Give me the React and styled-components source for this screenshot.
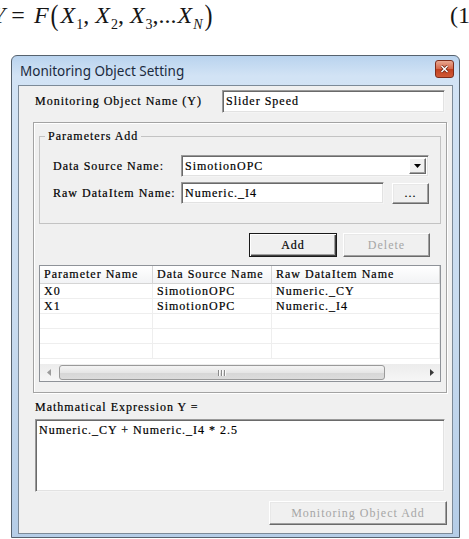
import React from 'react';
import styled, { createGlobalStyle } from 'styled-components';

const GlobalStyle = createGlobalStyle`
  html, body { margin: 0; padding: 0; background: #fff; }
  body { width: 469px; height: 539px; overflow: hidden; }
`;

// the dialog uses a thin serif system font; Times metrics + tracking come close
const dialogFont = `"Liberation Serif", "Times New Roman", serif`;

const Page = styled.div`
  width: 469px;
  height: 539px;
  overflow: hidden;
`;

/* ---------- formula above the dialog ---------- */

const FormulaRow = styled.div`
  display: flex;
  align-items: flex-start;
  height: 53px;
  padding-top: 2px;
  width: 486px;
  margin-left: -8px;
  font-family: "Liberation Serif", "Times New Roman", serif;
  font-size: 24px;
  line-height: 26px;
  color: #151515;
  white-space: nowrap;
`;

const Formula = styled.span`
  display: block;
`;

const Var = styled.span`
  font-style: italic;
`;

const Op = styled.span`
  margin: 0 9px 0 6px;
`;

const Paren = styled.span`
  display: inline-block;
  margin: 0 2px;
  transform: scaleY(1.2);
`;

const Sub = styled.sub`
  font-size: 14px;
  line-height: 0;
  vertical-align: -6px;
  margin-left: 1px;
  font-style: ${p => (p.$italic ? 'italic' : 'normal')};
`;

const Comma = styled.span`
  margin-right: ${p => p.$gap || 6}px;
`;

const EqNumber = styled.span`
  margin-left: auto;
`;

/* ---------- window chrome ---------- */

const Window = styled.div`
  margin-left: 11px;
  width: 449px;
  height: 483px;
  box-sizing: border-box;
  border: 1px solid #56626e;
  border-radius: 6px 6px 0 0;
  background: linear-gradient(180deg, #b9d3ee 0%, #d2e3f5 20px, #c8dbef 55%, #b5cde7 100%);
  padding: 0 6px 3px 6px;
  display: flex;
  flex-direction: column;
`;

const TitleBar = styled.div`
  height: 29px;
  display: flex;
  align-items: center;
  justify-content: space-between;
  padding-left: 2px;
  margin-right: -1px;
`;

const Title = styled.span`
  font-family: "Noto Sans", "Open Sans", sans-serif;
  font-size: 13.5px;
  color: #1b2a3e;
  padding-top: 1px;
`;

const CloseBtn = styled.div`
  align-self: flex-start;
  margin-top: 4px;
  width: 19px;
  height: 18px;
  box-sizing: border-box;
  border: 1px solid #7e2c1b;
  border-radius: 3px;
  background: linear-gradient(180deg, #e9a891 0%, #d6694b 48%, #c2401f 52%, #d05a37 100%);
  display: flex;
  align-items: center;
  justify-content: center;
`;

const Client = styled.div`
  flex: 1;
  background: #f0f0f0;
  border: 1px solid #7c8a98;
  padding: 4px 7px 0 16px;
  display: flex;
  flex-direction: column;
  font-family: ${dialogFont};
  font-size: 12px;
  letter-spacing: 1px;
  color: #000;
  -webkit-text-stroke: 0.2px #000;
`;

/* ---------- controls ---------- */

const Row = styled.div`
  display: flex;
  align-items: center;
  height: ${p => p.$h || 22}px;
  margin-top: ${p => p.$mt || 0}px;
  justify-content: ${p => p.$justify || 'flex-start'};
`;

const Label = styled.span`
  width: ${p => (p.$w ? `${p.$w}px` : 'auto')};
  flex-shrink: 0;
  white-space: pre;
`;

const TextBox = styled.div`
  width: ${p => p.$w}px;
  height: ${p => p.$h || 22}px;
  box-sizing: border-box;
  background: #fff;
  border-style: solid;
  border-width: 1px;
  border-color: #9a9a9a #f4f4f4 #f4f4f4 #9a9a9a;
  box-shadow: inset 1px 1px 0 #6a6a6a, inset -1px -1px 0 #e2e2e2;
  padding: 0 3px;
  display: flex;
  align-items: center;
  white-space: pre;
`;

const Combo = styled(TextBox)`
  padding-right: 2px;
  justify-content: space-between;
`;

const DropBtn = styled.span`
  width: 17px;
  height: 16px;
  box-sizing: border-box;
  background: #f0f0f0;
  border: 1px solid;
  border-color: #fff #6a6a6a #6a6a6a #fff;
  box-shadow: inset -1px -1px 0 #a0a0a0;
  display: flex;
  align-items: center;
  justify-content: center;
`;

const Button = styled.div`
  width: ${p => p.$w}px;
  height: ${p => p.$h || 24}px;
  margin-left: ${p => p.$ml || 0}px;
  box-sizing: border-box;
  background: #f0f0f0;
  border: 1px solid;
  border-color: ${p => (p.$default ? '#1a1a1a' : '#fff #6a6a6a #6a6a6a #fff')};
  box-shadow: ${p =>
    p.$default
      ? 'inset 1px 1px 0 #fff, inset -1px -1px 0 #404040, inset -2px -2px 0 #a0a0a0'
      : 'inset -1px -1px 0 #a0a0a0, inset 1px 1px 0 #e8e8e8'};
  color: ${p => (p.$disabled ? '#a6a6a6' : '#000')};
  -webkit-text-stroke: ${p => (p.$disabled ? '0' : '0.2px #000')};
  display: flex;
  align-items: center;
  justify-content: center;
  white-space: pre;
  flex-shrink: 0;
`;

const ButtonRow = styled.div`
  display: flex;
  justify-content: flex-end;
  gap: 6px;
  margin-top: 9px;
  padding-right: 11px;
`;

/* ---------- panels ---------- */

const OuterPanel = styled.div`
  margin: 9px -2px 0 -2px;
  height: 271px;
  box-sizing: border-box;
  border: 1px solid #a3a3a3;
  box-shadow: inset 1px 1px 0 #fff, 1px 1px 0 #fff;
  padding: 7px 5px 0 5px;
  display: flex;
  flex-direction: column;
`;

const Group = styled.fieldset`
  margin: 0;
  padding: 12px 10px 19px 13px;
  border: 1px solid #c3c3c3;
  min-width: 0;
`;

const Legend = styled.legend`
  margin-left: -8px;
  padding: 0 3px;
  line-height: 13px;
`;

const ListView = styled.div`
  margin-top: 8px;
  height: 117px;
  box-sizing: border-box;
  border: 1px solid #8e9298;
  background: #fff;
  display: flex;
  flex-direction: column;
`;

const cols = '113px 119px 1fr';

const HeaderRow = styled.div`
  display: grid;
  grid-template-columns: ${cols};
  height: 18px;
  flex-shrink: 0;
  box-sizing: border-box;
  border-bottom: 1px solid #d5d5d5;
  background: linear-gradient(180deg, #ffffff, #f2f3f5);
`;

const HeaderCell = styled.div`
  border-right: 1px solid #d5d5d5;
  padding-left: 4px;
  display: flex;
  align-items: center;
  white-space: pre;
  overflow: hidden;
`;

const ListBody = styled.div`
  flex: 1;
  overflow: hidden;
`;

const ListRow = styled.div`
  display: grid;
  grid-template-columns: ${cols};
  height: 15px;
  box-sizing: border-box;
  border-bottom: 1px solid #eeeeee;
`;

const Cell = styled.div`
  border-right: 1px solid #eeeeee;
  padding-left: 4px;
  display: flex;
  align-items: center;
  white-space: pre;
`;

const HScroll = styled.div`
  height: 17px;
  flex-shrink: 0;
  display: flex;
  align-items: center;
  background: linear-gradient(180deg, #ececec, #f6f6f6);
`;

const ScrollArrow = styled.div`
  width: 17px;
  height: 17px;
  display: flex;
  align-items: center;
  justify-content: center;
  flex-shrink: 0;
`;

const Thumb = styled.div`
  margin-left: 2px;
  width: 326px;
  height: 15px;
  box-sizing: border-box;
  border: 1px solid #9a9a9a;
  border-radius: 3px;
  background: linear-gradient(180deg, #f4f4f4 0%, #e6e6e6 50%, #d6d6d6 51%, #dcdcdc 100%);
  display: flex;
  align-items: center;
  justify-content: center;
  gap: 1px;
`;

const GripBar = styled.span`
  width: 1px;
  height: 6px;
  background: #8a8a8a;
  border-right: 1px solid #fafafa;
`;

const Spacer = styled.div`
  flex: 1;
`;

const ExprBox = styled.div`
  margin-top: 5px;
  height: 73px;
  box-sizing: border-box;
  background: #fff;
  border-style: solid;
  border-width: 1px;
  border-color: #9a9a9a #f4f4f4 #f4f4f4 #9a9a9a;
  box-shadow: inset 1px 1px 0 #6a6a6a, inset -1px -1px 0 #e2e2e2;
  padding: 3px 3px;
  white-space: pre;
`;

const rows = [
  ['X0', 'SimotionOPC', 'Numeric._CY'],
  ['X1', 'SimotionOPC', 'Numeric._I4'],
  ['', '', ''],
  ['', '', ''],
  ['', '', ''],
];

export default function App() {
  return (
    <Page>
      <GlobalStyle />
      <FormulaRow>
        <Formula>
          <Var>Y</Var>
          <Op>=</Op>
          <Var>F</Var>
          <Paren>(</Paren>
          <Var>X</Var><Sub>1</Sub><Comma>,</Comma>
          <Var>X</Var><Sub>2</Sub><Comma>,</Comma>
          <Var>X</Var><Sub>3</Sub><Comma $gap={1}>,...</Comma>
          <Var>X</Var><Sub $italic>N</Sub>
          <Paren>)</Paren>
        </Formula>
        <EqNumber>(1)</EqNumber>
      </FormulaRow>

      <Window>
        <TitleBar>
          <Title>Monitoring Object Setting</Title>
          <CloseBtn>
            <svg width="9" height="8" viewBox="0 0 9 8">
              <path d="M1.5 1 L7.5 7 M7.5 1 L1.5 7" stroke="#6b2414" strokeWidth="3" />
              <path d="M1.5 1 L7.5 7 M7.5 1 L1.5 7" stroke="#fff" strokeWidth="1.5" />
            </svg>
          </CloseBtn>
        </TitleBar>

        <Client>
          <Row $h={23} $justify="space-between">
            <Label>Monitoring Object Name (Y)</Label>
            <TextBox $w={223} $h={23}>Slider Speed</TextBox>
          </Row>

          <OuterPanel>
            <Group>
              <Legend>Parameters Add</Legend>
              <Row>
                <Label $w={128}>Data Source Name:</Label>
                <Combo $w={248}>
                  <span>SimotionOPC</span>
                  <DropBtn>
                    <svg width="7" height="4" viewBox="0 0 7 4">
                      <path d="M0 0 H7 L3.5 4 Z" fill="#000" />
                    </svg>
                  </DropBtn>
                </Combo>
              </Row>
              <Row $mt={5}>
                <Label $w={128}>Raw DataItem Name:</Label>
                <TextBox $w={203}>Numeric._I4</TextBox>
                <Button $w={37} $h={21} $ml={8}>...</Button>
              </Row>
            </Group>

            <ButtonRow>
              <Button $w={88} $default>Add</Button>
              <Button $w={87} $disabled>Delete</Button>
            </ButtonRow>

            <ListView>
              <HeaderRow>
                <HeaderCell>Parameter Name</HeaderCell>
                <HeaderCell>Data Source Name</HeaderCell>
                <HeaderCell>Raw DataItem Name</HeaderCell>
              </HeaderRow>
              <ListBody>
                {rows.map((r, i) => (
                  <ListRow key={i}>
                    {r.map((c, j) => (
                      <Cell key={j}>{c}</Cell>
                    ))}
                  </ListRow>
                ))}
              </ListBody>
              <HScroll>
                <ScrollArrow>
                  <svg width="4" height="7" viewBox="0 0 4 7">
                    <path d="M4 0 V7 L0 3.5 Z" fill="#9c9c9c" />
                  </svg>
                </ScrollArrow>
                <Thumb>
                  <GripBar />
                  <GripBar />
                  <GripBar />
                </Thumb>
                <Spacer />
                <ScrollArrow>
                  <svg width="4" height="7" viewBox="0 0 4 7">
                    <path d="M0 0 V7 L4 3.5 Z" fill="#3a3a3a" />
                  </svg>
                </ScrollArrow>
              </HScroll>
            </ListView>
          </OuterPanel>

          <Row $h={13} $mt={8}>
            <Label>Mathmatical Expression Y =</Label>
          </Row>
          <ExprBox>Numeric._CY + Numeric._I4 * 2.5</ExprBox>

          <Row $h={24} $mt={9} $justify="flex-end" style={{ marginRight: -2 }}>
            <Button $w={178} $disabled>Monitoring Object Add</Button>
          </Row>
        </Client>
      </Window>
    </Page>
  );
}
